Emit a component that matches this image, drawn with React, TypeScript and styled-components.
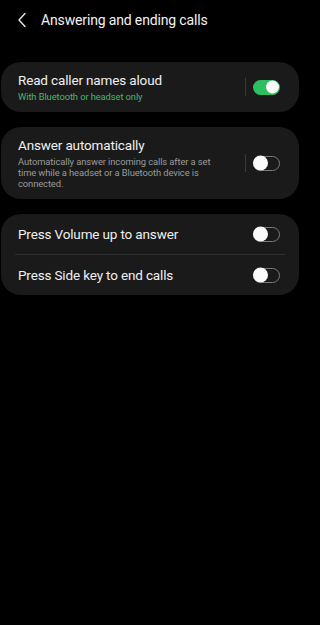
import React, { useState } from 'react';
import styled, { createGlobalStyle } from 'styled-components';

const GlobalStyle = createGlobalStyle`
  html, body {
    margin: 0;
    padding: 0;
    background: #000;
  }
  body {
    font-family: Roboto, 'Noto Sans', 'Liberation Sans', sans-serif;
    color: #f1f1f1;
  }
`;

type Setting = {
  id: string;
  title: string;
  summary?: string;
  accent?: boolean;
  on: boolean;
  divider?: boolean;
};

const groups: Setting[][] = [
  [
    {
      id: 'read',
      title: 'Read caller names aloud',
      summary: 'With Bluetooth or headset only',
      accent: true,
      on: true,
      divider: true,
    },
  ],
  [
    {
      id: 'auto',
      title: 'Answer automatically',
      summary:
        'Automatically answer incoming calls after a set time while a headset or a Bluetooth device is connected.',
      on: false,
      divider: true,
    },
  ],
  [
    { id: 'volume', title: 'Press Volume up to answer', on: false },
    { id: 'side', title: 'Press Side key to end calls', on: false },
  ],
];

const App = () => {
  const [values, setValues] = useState<Record<string, boolean>>(() => {
    const init: Record<string, boolean> = {};
    groups.flat().forEach(s => {
      init[s.id] = s.on;
    });
    return init;
  });

  const toggle = (id: string) => {
    setValues(prev => ({ ...prev, [id]: !prev[id] }));
  };

  return (
    <Screen>
      <GlobalStyle />
      <Header>
        <BackButton aria-label="Back">
          <svg width="10" height="16" viewBox="0 0 10 16">
            <path
              d="M8 1.5 L2 8 L8 14.5"
              fill="none"
              stroke="#e8e8e8"
              strokeWidth="1.4"
              strokeLinecap="round"
              strokeLinejoin="round"
            />
          </svg>
        </BackButton>
        <HeaderTitle>Answering and ending calls</HeaderTitle>
      </Header>
      <CardList>
        {groups.map((group, gi) => (
          <Card key={gi}>
            {group.map((s, i) => (
              <React.Fragment key={s.id}>
                {i > 0 && <RowDivider />}
                <Row onClick={() => toggle(s.id)} $tall={!s.summary}>
                  <TextBlock>
                    <Title>{s.title}</Title>
                    {s.summary && (
                      <Summary $accent={s.accent}>{s.summary}</Summary>
                    )}
                  </TextBlock>
                  {s.divider && <VerticalLine />}
                  <Switch $on={values[s.id]}>
                    <Thumb $on={values[s.id]} />
                  </Switch>
                </Row>
              </React.Fragment>
            ))}
          </Card>
        ))}
      </CardList>
    </Screen>
  );
};

const Screen = styled.div`
  width: 300px;
  min-height: 625px;
  background: #000;
`;

const Header = styled.div`
  display: flex;
  align-items: center;
  height: 40px;
  padding: 0 0 0 17px;
`;

const BackButton = styled.div`
  display: flex;
  align-items: center;
  width: 24px;
  height: 24px;
`;

const HeaderTitle = styled.div`
  font-size: 14px;
  color: #f2f2f2;
  letter-spacing: -0.15px;
`;

const CardList = styled.div`
  display: flex;
  flex-direction: column;
  gap: 15px;
  padding: 22px 1px 0;
`;

const Card = styled.div`
  background: #1a1a1a;
  border-radius: 20px;
  overflow: hidden;
`;

const Row = styled.div<{ $tall?: boolean }>`
  display: flex;
  align-items: center;
  padding: ${props => (props.$tall ? '11px 19px 11px 17px' : '10px 19px 10px 17px')};
  min-height: ${props => (props.$tall ? '18px' : '30px')};
  cursor: pointer;
`;

const TextBlock = styled.div`
  flex: 1;
  display: flex;
  flex-direction: column;
  padding-right: 14px;
`;

const Title = styled.div`
  font-size: 13.5px;
  line-height: 17px;
  letter-spacing: -0.15px;
  color: #f0f0f0;
`;

const Summary = styled.div<{ $accent?: boolean }>`
  max-width: 208px;
  font-size: 9.4px;
  line-height: 11px;
  letter-spacing: -0.1px;
  margin-top: 2px;
  color: ${props => (props.$accent ? '#45b96f' : '#9a9a9a')};
`;

const VerticalLine = styled.div`
  width: 1px;
  height: 18px;
  background: #3a3a3a;
  margin-right: 7px;
`;

const Switch = styled.div<{ $on: boolean }>`
  position: relative;
  flex-shrink: 0;
  width: 27px;
  height: 15px;
  box-sizing: border-box;
  border-radius: 8px;
  background: ${props => (props.$on ? '#2fbf63' : 'transparent')};
  border: ${props => (props.$on ? 'none' : '1.3px solid #7a7a7a')};
`;

const Thumb = styled.div<{ $on: boolean }>`
  position: absolute;
  top: 50%;
  transform: translateY(-50%);
  width: ${props => (props.$on ? '13px' : '15px')};
  height: ${props => (props.$on ? '13px' : '15px')};
  border-radius: 50%;
  background: #fafafa;
  left: ${props => (props.$on ? '13px' : '-1px')};
`;

const RowDivider = styled.div`
  height: 1px;
  margin: 0 14px;
  background: #2e2e2e;
`;

export default App;
